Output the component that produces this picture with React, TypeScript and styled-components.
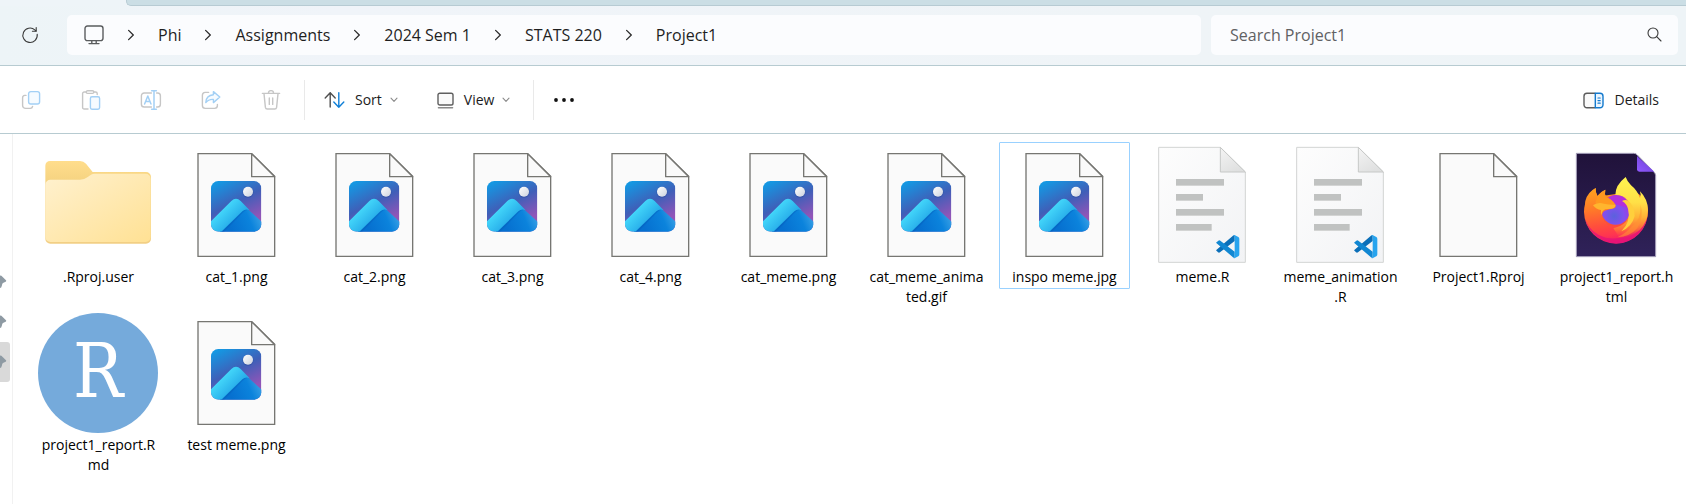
import React from "react";
import styled, { createGlobalStyle } from "styled-components";

const GlobalStyle = createGlobalStyle`
  *, *::before, *::after { box-sizing: border-box; }
  body {
    margin: 0;
    background: #ffffff;
    color: #1b1b1b;
    font-family: "Open Sans", "Noto Sans", sans-serif;
    font-size: 14px;
    line-height: 20px;
  }
  button, input { font: inherit; color: inherit; }
`;

const Window = styled.div`
  display: flex;
  flex-direction: column;
  min-height: 100vh;
`;

const TitleStrip = styled.div`
  height: 6px;
  padding-left: 126px;
  background: #eef4f8;
`;

const TitleFill = styled.div`
  height: 6px;
  border-bottom: 1px solid #b7cbd3;
  border-left: 1px solid #b7cbd3;
  border-bottom-left-radius: 5px;
  background: #cbdee5;
`;

const AddressRow = styled.header`
  display: grid;
  grid-template-columns: 57px minmax(0, 17fr) minmax(0, 7fr);
  align-items: center;
  gap: 10px;
  height: 60px;
  padding: 0 8px 2px 0;
  background: linear-gradient(90deg, #edf4f7, #f0f4f9 20%, #eff4f7 70%, #eef4f7);
  border-bottom: 1px solid #b7cbd1;
`;

const RefreshButton = styled.button`
  display: grid;
  place-items: center;
  width: 57px;
  height: 40px;
  padding: 0 0 0 2px;
  border: 0;
  background: none;
`;

const Breadcrumb = styled.nav`
  display: flex;
  align-items: center;
  height: 40px;
  padding-left: 17px;
  border-radius: 5px;
  background: #fbfcfe;
  font-size: 16px;
  line-height: 24px;
  white-space: nowrap;
  overflow: hidden;
`;

const Crumb = styled.a`
  display: flex;
  color: #1f1f1f;
  text-decoration: none;
`;

const CrumbArrow = styled.span`
  display: grid;
  place-items: center;
  width: 54px;
`;

const SearchBox = styled.label`
  display: flex;
  align-items: center;
  height: 40px;
  padding: 0 16px 0 19px;
  border-radius: 5px;
  background: #fbfcfe;
`;

const SearchInput = styled.input`
  flex: 1;
  min-width: 0;
  padding: 0;
  border: 0;
  outline: 0;
  background: none;
  font-size: 16px;
  line-height: 24px;
  &::placeholder { color: #606163; opacity: 1; }
`;

const Toolbar = styled.div`
  display: flex;
  align-items: center;
  height: 68px;
  padding: 1px 0 0 1px;
  border-bottom: 1px solid #b7cbd1;
`;

const ToolButton = styled.button`
  display: grid;
  place-items: center;
  width: 60px;
  height: 40px;
  padding: 0;
  border: 0;
  background: none;
`;

const LabelButton = styled.button<{ $end?: boolean }>`
  display: flex;
  align-items: center;
  gap: 10px;
  height: 40px;
  padding: 0 ${(p) => (p.$end ? 27 : 20)}px 0 19px;
  margin-left: ${(p) => (p.$end ? "auto" : "0")};
  border: 0;
  background: none;
`;

const LabelText = styled.span`
  margin-right: -2px;
`;

const Divider = styled.span`
  width: 1px;
  height: 40px;
  margin-left: 3px;
  background: #e9e9e9;
`;

const Body = styled.main`
  flex: 1;
  display: flex;
`;

const NavPane = styled.aside`
  flex: none;
  width: 13px;
  padding-top: 128px;
  border-right: 1px solid #f1f1f1;
`;

const NavItem = styled.div<{ $active?: boolean }>`
  display: flex;
  align-items: center;
  width: 10px;
  height: 40px;
  border-radius: 0 3px 3px 0;
  background: ${(p) => (p.$active ? "#d9d9d9" : "transparent")};
`;

const FileGrid = styled.ul`
  flex: 1;
  display: flex;
  flex-wrap: wrap;
  align-items: flex-start;
  align-content: flex-start;
  gap: 1px 7px;
  margin: 0;
  padding: 8px 0 0 20px;
  list-style: none;
`;

const Tile = styled.button<{ $focused?: boolean }>`
  display: flex;
  flex-direction: column;
  align-items: center;
  gap: 2px;
  width: 131px;
  padding: 2px 6px 1px;
  border: 1px solid ${(p) => (p.$focused ? "#99d1ff" : "transparent")};
  border-radius: 1px;
  background: none;
  color: #000000;
`;

const FileIcon = styled.svg`
  display: block;
  flex: none;
  width: 120px;
  height: 120px;
  margin: 0 -1px 0 -2px;
`;

const FileName = styled.span`
  width: 117px;
  text-align: center;
  overflow-wrap: anywhere;
`;

const stroke = { fill: "none", strokeLinecap: "round", strokeLinejoin: "round" } as const;

const RefreshIcon = () => (
  <svg width="18" height="18" viewBox="0 0 18 18" {...stroke} stroke="#3a3a3a" strokeWidth="1.1">
    <path d="M16.2 8.2a7.2 7.2 0 1 1-2.4-4.4L15 5" />
    <path d="M15.2 1.6V5.2H11.4" />
  </svg>
);

const MonitorIcon = () => (
  <svg width="20" height="20" viewBox="0 0 20 20" {...stroke} stroke="#5a5c5e" strokeWidth="1.4">
    <rect x="1" y="1" width="18" height="14.6" rx="2.4" />
    <path d="M7.8 15.8v2.6M12.2 15.8v2.6M5 18.6h10" />
  </svg>
);

const ArrowIcon = () => (
  <svg width="8" height="12" viewBox="0 0 8 12" {...stroke} stroke="#2b2b2b" strokeWidth="1.3">
    <path d="M1.6 1.4 6.3 6 1.6 10.6" />
  </svg>
);

const MagnifierIcon = () => (
  <svg width="15" height="15" viewBox="0 0 15 15" {...stroke} stroke="#3a3a3a" strokeWidth="1.1">
    <circle cx="6" cy="6" r="5" />
    <path d="M9.7 9.7 14 14" />
  </svg>
);

const CaretIcon = () => (
  <svg width="8" height="6" viewBox="0 0 8 6" {...stroke} stroke="#8a8a8a" strokeWidth="1.1">
    <path d="M1 1.2 4 4.3 7 1.2" />
  </svg>
);

const GREY = "#c6c6c6";
const BLUE = "#a3d0f5";

const CopyIcon = () => (
  <svg width="20" height="20" viewBox="0 0 20 20" {...stroke} strokeWidth="1.4">
    <path stroke={GREY} d="M5 5.4H3.8A2.4 2.4 0 0 0 1.6 7.8v7.6a3 3 0 0 0 3 3h4.6a2.4 2.4 0 0 0 2.4-2" />
    <rect stroke={BLUE} fill="#f6fbff" x="7.6" y="1.6" width="11" height="12.4" rx="2.2" />
  </svg>
);

const PasteIcon = () => (
  <svg width="20" height="20" viewBox="0 0 20 20" {...stroke} strokeWidth="1.4">
    <path stroke={GREY} d="M7 19H3.2a1.6 1.6 0 0 1-1.6-1.6V3.6A1.6 1.6 0 0 1 3.2 2H5M13 2h1.6a1.6 1.6 0 0 1 1.6 1.6v1" />
    <rect stroke={GREY} x="5.2" y=".8" width="7.6" height="2.6" rx="1.3" />
    <rect stroke={BLUE} fill="#f6fbff" x="9.4" y="6.8" width="9.2" height="12.4" rx="1.6" />
  </svg>
);

const RenameIcon = () => (
  <svg width="22" height="20" viewBox="0 0 22 20" {...stroke} strokeWidth="1.4">
    <path stroke={GREY} d="M11.4 3H4.2A2.8 2.8 0 0 0 1.4 5.8v8.4A2.8 2.8 0 0 0 4.2 17h7.2M16.6 3h1A2.8 2.8 0 0 1 20.4 5.8v8.4A2.8 2.8 0 0 1 17.6 17h-1" />
    <path stroke={BLUE} strokeWidth="1.5" d="M4.6 14 7.8 6l3.2 8M5.6 11.6H10M14 1v18M11.6.8h4.8M11.6 19.2h4.8" />
  </svg>
);

const ShareIcon = () => (
  <svg width="20" height="20" viewBox="0 0 20 20" {...stroke} strokeWidth="1.4">
    <path stroke={GREY} d="M7.6 2.4H4.2A2.8 2.8 0 0 0 1.4 5.2v10.4a2.8 2.8 0 0 0 2.8 2.8h9.4a2.8 2.8 0 0 0 2.8-2.8v-1.2" />
    <path stroke={BLUE} fill="#f6fbff" d="M12.4 1.6 18.8 7l-6.4 5.6V9.4c-3.6-.2-5.8.8-7.6 3.2.2-4.6 2.8-7.4 7.6-7.8z" />
  </svg>
);

const TrashIcon = () => (
  <svg width="20" height="20" viewBox="0 0 20 20" {...stroke} stroke={GREY} strokeWidth="1.4">
    <path d="M1.4 3.4h17.2M7.4 3.2a2.6 2.6 0 0 1 5.2 0M3 3.6l1.4 13.8A1.9 1.9 0 0 0 6.3 19h7.4a1.9 1.9 0 0 0 1.9-1.6L17 3.6M8.3 8v6.4M11.7 8v6.4" />
  </svg>
);

const SortIcon = () => (
  <svg width="21" height="18" viewBox="0 0 21 18" {...stroke} strokeWidth="1.4">
    <path stroke="#4f4f4f" d="M6.2 16V1.8M1.2 7l5-5.2 5 5.2" />
    <path stroke="#0f7fd7" d="M14.8 1.8v14.4M9.8 11l5 5.2 5-5.2" />
  </svg>
);

const ViewIcon = () => (
  <svg width="17" height="17" viewBox="0 0 17 17" {...stroke} stroke="#5f5f5f" strokeWidth="1.4">
    <rect x="1" y="1.2" width="15" height="11.8" rx="1.8" fill="#fafafa" />
    <path d="M1.4 15.8h14.2" stroke="#8a8a8a" />
  </svg>
);

const DotsIcon = () => (
  <svg width="22" height="6" viewBox="0 0 22 6" fill="#111111">
    <circle cx="3" cy="3" r="1.9" />
    <circle cx="11" cy="3" r="1.9" />
    <circle cx="19" cy="3" r="1.9" />
  </svg>
);

const DetailsIcon = () => (
  <svg width="21" height="17" viewBox="0 0 21 17" {...stroke} strokeWidth="1.4">
    <path stroke="#5c5c5c" fill="#fafafa" d="M12 1.2H4A3 3 0 0 0 1 4.2v8.6a3 3 0 0 0 3 3h8" />
    <path stroke="#1379cd" fill="#eaf5fe" d="M12.3 1.2h4.7a3 3 0 0 1 3 3v8.6a3 3 0 0 1-3 3h-4.7z" />
    <path stroke="#1379cd" strokeWidth="1.2" d="M15 6h2.2M15 8.6h2.2M15 11.2h2.2" />
  </svg>
);

const PinIcon = () => (
  <svg width="7" height="14" viewBox="0 0 7 14" fill="#8e9aa3">
    <path d="M0 .6 1.4.8 6 5.2c.5.6.2 1.2-.4 1.5L3 8c-.8.5-.8 1.300-1 2.300L1.200 12.600 0 13z" />
  </svg>
);

const FolderArt = () => (
  <FileIcon viewBox="114 45 360 360" aria-hidden="true">
    <defs>
      <linearGradient id="folderFront" x1="0" y1="0" x2="1" y2="1">
        <stop offset="0" stopColor="#fff1cf" />
        <stop offset="1" stopColor="#ffe194" />
      </linearGradient>
      <linearGradient id="folderBack" x1="0" y1="0" x2="0" y2="1">
        <stop offset="0" stopColor="#ffdd8c" />
        <stop offset=".25" stopColor="#f5d381" />
        <stop offset="1" stopColor="#f2cf85" />
      </linearGradient>
    </defs>
    <path fill="url(#folderBack)" d="M136 107a14 14 0 0 1 14-14h90q11 0 18 8l20 25h160a15 15 0 0 1 15 15v185a15 15 0 0 1-15 15H151a15 15 0 0 1-15-15z" />
    <path fill="url(#folderFront)" d="M136 164a15 15 0 0 1 15-15h89q14 0 22-7l11-8q5-3 11-3h153a15 15 0 0 1 15 15v175a15 15 0 0 1-15 15H151a15 15 0 0 1-15-15z" />
  </FileIcon>
);

const Sheet = () => (
  <>
    <path fill="#fafafa" stroke="#767672" strokeWidth="4" d="M594 71h161l69 68v240H594z" />
    <path fill="#fafafa" stroke="#767672" strokeWidth="4" strokeLinejoin="round" d="M755 71v69h69z" />
  </>
);

const BlankArt = () => (
  <FileIcon viewBox="528 45 360 360" aria-hidden="true">
    <Sheet />
  </FileIcon>
);

const PictureArt = ({ id }: { id: string }) => (
  <FileIcon viewBox="528 45 360 360" aria-hidden="true">
    <defs>
      <linearGradient id={`${id}-sky`} x1=".2" y1="0" x2=".7" y2="1">
        <stop offset="0" stopColor="#1597e2" />
        <stop offset=".45" stopColor="#3f5fb8" />
        <stop offset=".85" stopColor="#9155b8" />
      </linearGradient>
      <linearGradient id={`${id}-ridge`} gradientUnits="userSpaceOnUse" x1="650" y1="245" x2="690" y2="285">
        <stop offset="0" stopColor="#47dcfc" />
        <stop offset="1" stopColor="#28aeea" />
      </linearGradient>
      <linearGradient id={`${id}-slope`} gradientUnits="userSpaceOnUse" x1="690" y1="290" x2="784" y2="250">
        <stop offset="0" stopColor="#0670d0" />
        <stop offset=".6" stopColor="#0b83dc" />
        <stop offset="1" stopColor="#40a4e6" />
      </linearGradient>
      <linearGradient id={`${id}-sun`} x1="0" y1="0" x2="1" y2="1">
        <stop offset="0" stopColor="#ffffff" />
        <stop offset="1" stopColor="#ccd2de" />
      </linearGradient>
      <clipPath id={`${id}-clip`}>
        <rect x="633" y="153" width="151" height="152" rx="22" />
      </clipPath>
    </defs>
    <Sheet />
    <g clipPath={`url(#${id}-clip)`}>
      <rect x="633" y="153" width="151" height="152" fill={`url(#${id}-sky)`} />
      <circle cx="744" cy="187" r="17" fill="#27418f" opacity=".3" />
      <circle cx="744" cy="185" r="15" fill={`url(#${id}-sun)`} />
      <path fill={`url(#${id}-slope)`} d="M655 310 728 236l14 0 46 42v32z" />
      <path fill="#0759b4" opacity=".35" d="M655 310 724 242q9-8 21-3-10 0-17 9L672 306z" />
      <path fill={`url(#${id}-ridge)`} d="M630 277 694 213q14-13 28 0l27 28q-12-6-22 3L664 305H630z" />
    </g>
  </FileIcon>
);

const CodeArt = ({ id }: { id: string }) => (
  <FileIcon viewBox="36 45 360 360" aria-hidden="true">
    <defs>
      <linearGradient id={`${id}-page`} x1="0" y1="0" x2="1" y2="1">
        <stop offset="0" stopColor="#fdfdfd" />
        <stop offset="1" stopColor="#f2f3f5" />
      </linearGradient>
      <linearGradient id={`${id}-fold`} x1="0" y1="0" x2=".6" y2="1">
        <stop offset="0" stopColor="#f4f4f4" />
        <stop offset="1" stopColor="#dfe0e0" />
      </linearGradient>
    </defs>
    <path fill={`url(#${id}-page)`} stroke="#d2d4d3" strokeWidth="3" d="M86 52h185l75 74v271H86z" />
    <path fill={`url(#${id}-fold)`} stroke="#c6c8c7" strokeWidth="3" strokeLinejoin="round" d="M271 52v74h75z" />
    <g fill="#c0c2c1">
      <rect x="138" y="147" width="144" height="20" />
      <rect x="138" y="192" width="81" height="20" />
      <rect x="138" y="237" width="144" height="20" />
      <rect x="138" y="282" width="107" height="20" />
    </g>
    <path fill="#0b6fb8" d="m258 361 6 6q3 2 6 0l44-34v-17q-3-1-6 2z" />
    <path fill="#1187d2" d="m258 338 7-6q3-2 6 0l43 33v18q-3 1-6-2z" />
    <path fill="#27a4ee" d="M308 317q3-3 7-1l10 5q3 2 3 6v46q0 4-3 6l-10 5q-4 2-7-2 6 3 6-4v-57q0-6-6-4z" />
  </FileIcon>
);

const FirefoxArt = () => (
  <FileIcon viewBox="468 45 360 360" aria-hidden="true">
    <defs>
      <linearGradient id="ffPage" x1="0" y1="0" x2="0" y2="1">
        <stop offset="0" stopColor="#20123a" />
        <stop offset="1" stopColor="#2f2259" />
      </linearGradient>
      <linearGradient id="ffFold" x1="0" y1="1" x2="1" y2="0">
        <stop offset="0" stopColor="#9059ff" />
        <stop offset="1" stopColor="#6b3fd0" />
      </linearGradient>
      <linearGradient id="ffBody" gradientUnits="userSpaceOnUse" x1="610" y1="175" x2="635" y2="340">
        <stop offset="0" stopColor="#ffa01e" />
        <stop offset=".35" stopColor="#ff7a28" />
        <stop offset=".65" stopColor="#ff4f3c" />
        <stop offset=".85" stopColor="#ff3550" />
        <stop offset="1" stopColor="#f01a6c" />
      </linearGradient>
      <linearGradient id="ffTail" gradientUnits="userSpaceOnUse" x1="690" y1="145" x2="690" y2="325">
        <stop offset="0" stopColor="#fff44f" />
        <stop offset=".4" stopColor="#ffe047" />
        <stop offset=".65" stopColor="#ffb236" />
        <stop offset=".85" stopColor="#ff7a35" stopOpacity=".8" />
        <stop offset="1" stopColor="#ff4a45" stopOpacity="0" />
      </linearGradient>
      <radialGradient id="ffGlobe" cx=".45" cy=".7" r=".75">
        <stop offset="0" stopColor="#5a62dc" />
        <stop offset=".45" stopColor="#8250ef" />
        <stop offset="1" stopColor="#b32bd8" />
      </radialGradient>
    </defs>
    <path fill="url(#ffPage)" stroke="#a9a3bd" strokeWidth="3" d="M529 70h172q6 0 10 4l50 51q6 6 6 12v243H529z" />
    <path fill="url(#ffFold)" d="M711 78v40q0 7 7 7h45z" />
    <path fill="url(#ffBody)" d="M587 174q-1 13 5 24l30-2 80-12q41 20 42 60a96 96 0 0 1-192 2q0-25 12-44 5-15 23-28z" />
    <path fill="#e3107c" opacity=".7" d="M555 268q18 44 62 55 52 10 92-24 18-16 32-32a96 96 0 0 1-186 1z" />
    <path fill="url(#ffTail)" d="M646 196q-1-30 31-55 5 14 16 25 18 14 27 38 4-8 0-20 24 24 24 57 0 36-26 60-26 22-58 24l-20-30q50-12 47-54-4-26-41-45z" />
    <path fill="#ff9533" opacity=".55" d="M694 290q30-18 28-66 10 40-10 70-22 26-60 28 28-14 42-32z" />
    <circle cx="647" cy="241" r="47" fill="#f4522f" opacity=".35" />
    <circle cx="647" cy="241" r="43" fill="url(#ffGlobe)" />
    <path fill="#b42fda" d="M622 206q10-12 27-11 22 0 34 18l3 20-40-10z" />
    <path fill="#ffcf3c" d="M666 213q10-5 18-1 20 14 20 46-8 32-40 46 30-30 20-68-3-14-18-23z" />
    <path fill="url(#ffBody)" d="M587 174q-1 13 5 24 10-13 24-19-3 12 2 23 16 4 28 22 3 8-4 11-16 4-28 7-10 6-7 20 5 22 30 29-34 10-66-16-20-28-15-62 6-26 31-39z" />
    <path fill="#ff981f" d="M592 198q10-13 24-19-3 12 2 23 16 4 28 22l-26 4-34-10z" />
    <path fill="#ffb52e" d="M579 226q14-10 33-5 17 4 35 3-1 10-12 12l-19 2q-12 5-10 18-5-8-3-16-15-2-24-14z" />
  </FileIcon>
);

const RmdArt = () => (
  <FileIcon viewBox="0 0 120 120" aria-hidden="true">
    <circle cx="60" cy="60" r="60" fill="#75aadb" />
    <text x="60" y="84" fill="#ffffff" fontSize="74" textAnchor="middle" fontFamily="'DejaVu Serif Condensed', 'DejaVu Serif', serif">
      R
    </text>
  </FileIcon>
);

type Kind = "folder" | "picture" | "code" | "blank" | "firefox" | "rmd";

const files: { name: string; kind: Kind; focused?: boolean }[] = [
  { name: ".Rproj.user", kind: "folder" },
  { name: "cat_1.png", kind: "picture" },
  { name: "cat_2.png", kind: "picture" },
  { name: "cat_3.png", kind: "picture" },
  { name: "cat_4.png", kind: "picture" },
  { name: "cat_meme.png", kind: "picture" },
  { name: "cat_meme_animated.gif", kind: "picture" },
  { name: "inspo meme.jpg", kind: "picture", focused: true },
  { name: "meme.R", kind: "code" },
  { name: "meme_animation.R", kind: "code" },
  { name: "Project1.Rproj", kind: "blank" },
  { name: "project1_report.html", kind: "firefox" },
  { name: "project1_report.Rmd", kind: "rmd" },
  { name: "test meme.png", kind: "picture" },
];

const FileArt = ({ kind, id }: { kind: Kind; id: string }) => {
  switch (kind) {
    case "folder":
      return <FolderArt />;
    case "picture":
      return <PictureArt id={id} />;
    case "code":
      return <CodeArt id={id} />;
    case "firefox":
      return <FirefoxArt />;
    case "rmd":
      return <RmdArt />;
    default:
      return <BlankArt />;
  }
};

const crumbs = ["Phi", "Assignments", "2024 Sem 1", "STATS 220", "Project1"];

export default function App() {
  return (
    <Window>
      <GlobalStyle />
      <TitleStrip>
        <TitleFill />
      </TitleStrip>
      <AddressRow>
        <RefreshButton aria-label="Refresh">
          <RefreshIcon />
        </RefreshButton>
        <Breadcrumb aria-label="Location">
          <Crumb href="#pc" aria-label="This PC">
            <MonitorIcon />
          </Crumb>
          {crumbs.map((crumb) => (
            <React.Fragment key={crumb}>
              <CrumbArrow>
                <ArrowIcon />
              </CrumbArrow>
              <Crumb href="#folder">{crumb}</Crumb>
            </React.Fragment>
          ))}
        </Breadcrumb>
        <SearchBox>
          <SearchInput type="text" placeholder="Search Project1" aria-label="Search Project1" />
          <MagnifierIcon />
        </SearchBox>
      </AddressRow>
      <Toolbar role="toolbar">
        <ToolButton aria-label="Copy"><CopyIcon /></ToolButton>
        <ToolButton aria-label="Paste"><PasteIcon /></ToolButton>
        <ToolButton aria-label="Rename"><RenameIcon /></ToolButton>
        <ToolButton aria-label="Share"><ShareIcon /></ToolButton>
        <ToolButton aria-label="Delete"><TrashIcon /></ToolButton>
        <Divider />
        <LabelButton>
          <SortIcon />
          <LabelText>Sort</LabelText>
          <CaretIcon />
        </LabelButton>
        <LabelButton>
          <ViewIcon />
          <LabelText>View</LabelText>
          <CaretIcon />
        </LabelButton>
        <Divider />
        <ToolButton aria-label="More options"><DotsIcon /></ToolButton>
        <LabelButton $end>
          <DetailsIcon />
          Details
        </LabelButton>
      </Toolbar>
      <Body>
        <NavPane>
          <NavItem><PinIcon /></NavItem>
          <NavItem><PinIcon /></NavItem>
          <NavItem $active><PinIcon /></NavItem>
        </NavPane>
        <FileGrid>
          {files.map((file, index) => (
            <li key={file.name}>
              <Tile $focused={file.focused}>
                <FileArt kind={file.kind} id={`file${index}`} />
                <FileName>{file.name}</FileName>
              </Tile>
            </li>
          ))}
        </FileGrid>
      </Body>
    </Window>
  );
}
